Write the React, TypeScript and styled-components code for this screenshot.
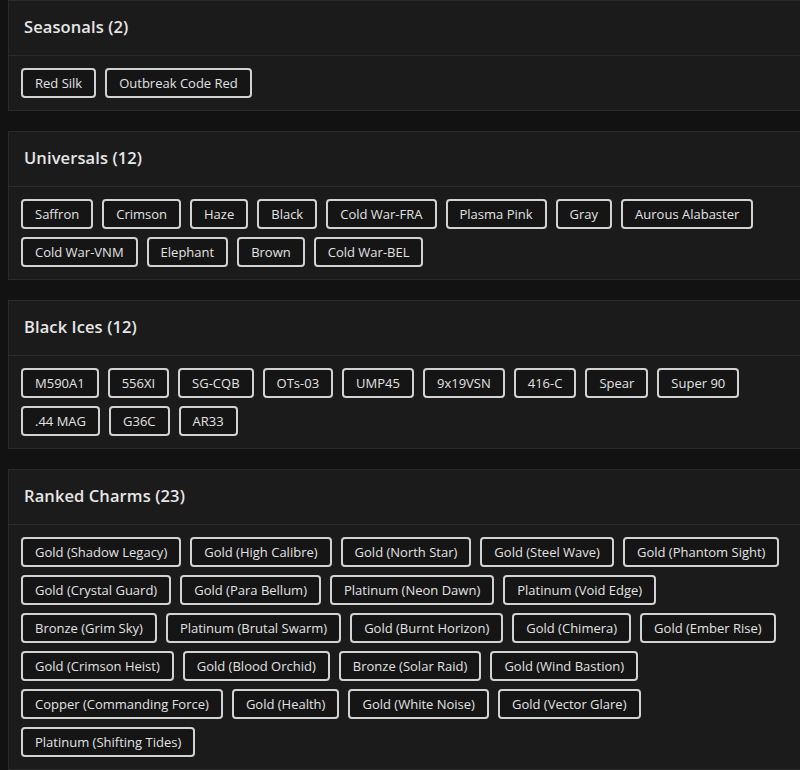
import React from "react";
import styled, { createGlobalStyle } from "styled-components";

const GlobalStyle = createGlobalStyle`
  html, body {
    margin: 0;
    padding: 0;
    background: #121212;
    font-family: "Open Sans", "Liberation Sans", sans-serif;
    overflow: hidden;
  }
`;

const Page = styled.div({
  display: "flex",
  flexDirection: "column",
  gap: "20px",
  padding: "0 0 0 8px",
  width: "792px",
});

const Card = styled.section({
  background: "#1b1b1b",
  border: "1px solid #2b2b2b",
  borderRight: "none",
});

const Header = styled.div({
  height: "54px",
  display: "flex",
  alignItems: "center",
  padding: "0 15px",
  borderBottom: "1px solid #2b2b2b",
});

const Title = styled.h2({
  margin: "-3px 0 0",
  fontSize: "16.5px",
  fontWeight: 600,
  color: "#e6e6e6",
  letterSpacing: "0.1px",
});

const Body = styled.div({
  display: "flex",
  flexWrap: "wrap",
  gap: "8px 9px",
  padding: "12px 13px 12px 12px",
});

const Chip = styled.span({
  display: "inline-flex",
  alignItems: "center",
  height: "30px",
  boxSizing: "border-box",
  padding: "0 12px",
  border: "2px solid #d2d2d2",
  borderRadius: "4px",
  background: "#151515",
  color: "#e2e2e2",
  fontSize: "13px",
  whiteSpace: "nowrap",
});

const groups: { title: string; items: string[] }[] = [
  { title: "Seasonals", items: ["Red Silk", "Outbreak Code Red"] },
  {
    title: "Universals",
    items: [
      "Saffron",
      "Crimson",
      "Haze",
      "Black",
      "Cold War-FRA",
      "Plasma Pink",
      "Gray",
      "Aurous Alabaster",
      "Cold War-VNM",
      "Elephant",
      "Brown",
      "Cold War-BEL",
    ],
  },
  {
    title: "Black Ices",
    items: ["M590A1", "556XI", "SG-CQB", "OTs-03", "UMP45", "9x19VSN", "416-C", "Spear", "Super 90", ".44 MAG", "G36C", "AR33"],
  },
  {
    title: "Ranked Charms",
    items: [
      "Gold (Shadow Legacy)",
      "Gold (High Calibre)",
      "Gold (North Star)",
      "Gold (Steel Wave)",
      "Gold (Phantom Sight)",
      "Gold (Crystal Guard)",
      "Gold (Para Bellum)",
      "Platinum (Neon Dawn)",
      "Platinum (Void Edge)",
      "Bronze (Grim Sky)",
      "Platinum (Brutal Swarm)",
      "Gold (Burnt Horizon)",
      "Gold (Chimera)",
      "Gold (Ember Rise)",
      "Gold (Crimson Heist)",
      "Gold (Blood Orchid)",
      "Bronze (Solar Raid)",
      "Gold (Wind Bastion)",
      "Copper (Commanding Force)",
      "Gold (Health)",
      "Gold (White Noise)",
      "Gold (Vector Glare)",
      "Platinum (Shifting Tides)",
    ],
  },
];

export default function App() {
  return (
    <>
      <GlobalStyle />
      <Page>
        {groups.map((g) => (
          <Card key={g.title}>
            <Header>
              <Title>
                {g.title} ({g.items.length})
              </Title>
            </Header>
            <Body>
              {g.items.map((item) => (
                <Chip key={item}>{item}</Chip>
              ))}
            </Body>
          </Card>
        ))}
      </Page>
    </>
  );
}
